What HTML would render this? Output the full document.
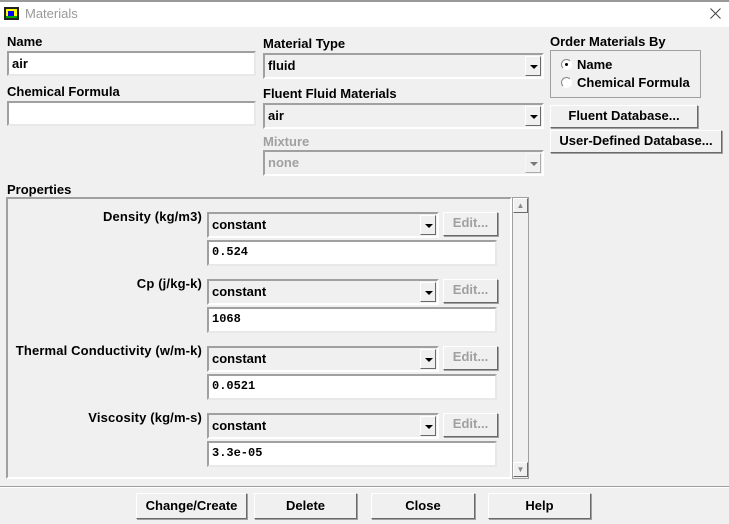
<!DOCTYPE html><html><head><style>
body{margin:0;width:729px;height:524px;background:#f0f0f0;position:relative;overflow:hidden;font-family:"Liberation Sans",sans-serif;font-weight:bold;font-size:13px;color:#000}
div,span{position:absolute;box-sizing:border-box}
.t{white-space:nowrap}
.in{background:#fff;border:2px solid;border-color:#a0a0a0 #e8e8e8 #e8e8e8 #a0a0a0;padding:2px 3px;line-height:17px}
.cb{background:#f0f0f0;border:2px solid;border-color:#a0a0a0 #fff #fff #a0a0a0;padding:2px 3px;line-height:17px}
.ar{right:1px;top:1px;bottom:1px;width:16px;border:1px solid;border-color:#fff #696969 #696969 #fff;background:#f0f0f0}
.ar:after{content:"";position:absolute;left:4px;top:8px;border:4px solid transparent;border-top:4px solid #000;border-bottom:0}
.bt{border:1px solid;border-color:#fff #696969 #696969 #fff;box-shadow:1px 1px 0 #a0a0a0;text-align:center;background:#f0f0f0;line-height:20px}
.mono{font-family:"Liberation Mono",monospace;font-size:12px}
.lbl{text-align:right;width:200px;left:2px;letter-spacing:0.15px}
.rd{width:11px;height:11px;border-radius:50%;border:1px solid;border-color:#888 #fff #fff #888;background:#fff}
</style></head><body>
<div style="left:0;top:0;width:729px;height:27px;background:#fff"></div>
<div style="left:0;top:0;width:729px;height:2px;background:#999"></div>
<div style="left:4px;top:7px;width:15px;height:13px;background:#ff0;border:2px solid #222"><div style="left:2px;top:2px;width:6px;height:5px;background:#00f"></div><div style="left:0;top:7px;width:11px;height:2px;background:#0a0"></div></div>
<div class="t" style="left:25px;top:6px;font-weight:normal;color:#999;font-size:13px">Materials</div>
<svg style="position:absolute;left:710px;top:8px" width="11" height="11"><path d="M0.5 0.5L10.5 10.5M10.5 0.5L0.5 10.5" stroke="#444" stroke-width="1"/></svg>

<div class="t" style="left:7px;top:34px">Name</div>
<div class="in" style="left:7px;top:51px;width:249px;height:25px">air</div>
<div class="t" style="left:7px;top:84px">Chemical Formula</div>
<div class="in" style="left:7px;top:101px;width:249px;height:25px"></div>

<div class="t" style="left:263px;top:36px">Material Type</div>
<div class="cb" style="left:263px;top:53px;width:281px;height:26px">fluid<span class="ar"></span></div>
<div class="t" style="left:263px;top:86px">Fluent Fluid Materials</div>
<div class="cb" style="left:263px;top:103px;width:281px;height:26px">air<span class="ar"></span></div>
<div class="t" style="left:263px;top:134px;color:#a0a0a0">Mixture</div>
<div class="cb" style="left:263px;top:150px;width:281px;height:26px;color:#a0a0a0">none<span class="ar" style="opacity:.5"></span></div>

<div class="t" style="left:550px;top:34px">Order Materials By</div>
<div style="left:550px;top:50px;width:151px;height:48px;border:1px solid #a0a0a0"></div>
<div class="rd" style="left:561px;top:59px"><div style="left:3px;top:3px;width:3px;height:3px;background:#000;border-radius:50%"></div></div>
<div class="t" style="left:577px;top:57px">Name</div>
<div class="rd" style="left:561px;top:77px"></div>
<div class="t" style="left:577px;top:75px">Chemical Formula</div>
<div class="bt" style="left:550px;top:105px;width:148px;height:23px">Fluent Database...</div>
<div class="bt" style="left:550px;top:130px;width:172px;height:23px">User-Defined Database...</div>

<div class="t" style="left:7px;top:182px">Properties</div>
<div style="left:6px;top:197px;width:506px;height:282px;border:2px solid;border-color:#a0a0a0 #fff #fff #a0a0a0"></div>
<div style="left:512px;top:197px;width:17px;height:282px;border:1px solid #a0a0a0;background:#f0f0f0"></div>
<div class="bt" style="left:513px;top:198px;width:15px;height:15px;font-size:8px;line-height:13px;color:#888;box-shadow:none">▲</div>
<div class="bt" style="left:513px;top:462px;width:15px;height:15px;font-size:8px;line-height:13px;color:#888;box-shadow:none">▼</div>

<div class="t lbl" style="top:209px">Density (kg/m3)</div>
<div class="cb" style="left:207px;top:212px;width:232px;height:26px">constant<span class="ar"></span></div>
<div class="bt" style="left:443px;top:212px;width:55px;height:24px;color:#a0a0a0">Edit...</div>
<div class="in mono" style="left:207px;top:240px;width:290px;height:26px">0.524</div>

<div class="t lbl" style="top:276px">Cp (j/kg-k)</div>
<div class="cb" style="left:207px;top:279px;width:232px;height:26px">constant<span class="ar"></span></div>
<div class="bt" style="left:443px;top:279px;width:55px;height:24px;color:#a0a0a0">Edit...</div>
<div class="in mono" style="left:207px;top:307px;width:290px;height:26px">1068</div>

<div class="t lbl" style="top:343px">Thermal Conductivity (w/m-k)</div>
<div class="cb" style="left:207px;top:346px;width:232px;height:26px">constant<span class="ar"></span></div>
<div class="bt" style="left:443px;top:346px;width:55px;height:24px;color:#a0a0a0">Edit...</div>
<div class="in mono" style="left:207px;top:374px;width:290px;height:26px">0.0521</div>

<div class="t lbl" style="top:410px">Viscosity (kg/m-s)</div>
<div class="cb" style="left:207px;top:413px;width:232px;height:26px">constant<span class="ar"></span></div>
<div class="bt" style="left:443px;top:413px;width:55px;height:24px;color:#a0a0a0">Edit...</div>
<div class="in mono" style="left:207px;top:441px;width:290px;height:26px">3.3e-05</div>

<div style="left:0;top:486px;width:729px;height:2px;border-top:1px solid #a0a0a0;border-bottom:1px solid #fff"></div>
<div class="bt" style="left:136px;top:493px;width:111px;height:26px;line-height:24px">Change/Create</div>
<div class="bt" style="left:254px;top:493px;width:103px;height:26px;line-height:24px">Delete</div>
<div class="bt" style="left:371px;top:493px;width:104px;height:26px;line-height:24px">Close</div>
<div class="bt" style="left:488px;top:493px;width:103px;height:26px;line-height:24px">Help</div>
</body></html>
